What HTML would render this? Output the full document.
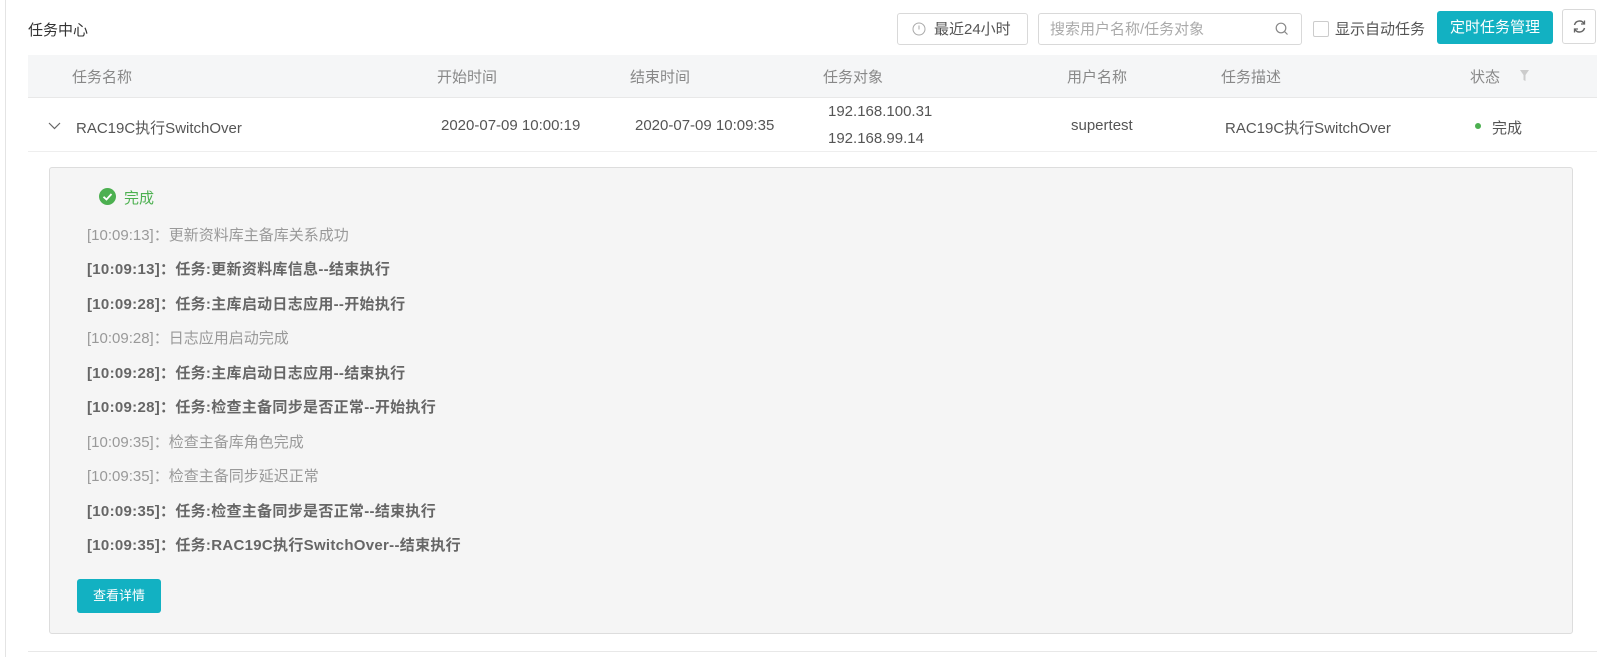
<!DOCTYPE html>
<html><head><meta charset="utf-8"><style>
*{margin:0;padding:0;box-sizing:border-box}
body{width:1605px;height:657px;background:#fff;font-family:"Liberation Sans","Noto Sans CJK SC",sans-serif;font-size:15px;color:#555;position:relative;overflow:hidden}
.a{position:absolute;white-space:nowrap}
.lb{border-left:1px solid #e4e4e4;position:absolute;left:5px;top:0;bottom:0}
.hd{position:absolute;left:28px;top:55px;width:1569px;height:43px;background:#f5f6f7;border-bottom:1px solid #e8e8e8}
.hd span{position:absolute;top:11px;color:#888}
.row span{position:absolute;color:#555}
.box{position:absolute;left:49px;top:167px;width:1524px;height:467px;background:#f5f5f5;border:1px solid #ddd;border-radius:3px}
.l{position:absolute;left:37px;color:#999;font-size:15px;white-space:nowrap}
.l.b{font-weight:bold;color:#666;letter-spacing:0.3px}
</style></head><body>
<div class="lb"></div>
<div class="a" style="left:28px;top:19px;color:#333">任务中心</div>
<div class="a" style="left:897px;top:13px;width:131px;height:32px;border:1px solid #d9d9d9;border-radius:3px"></div>
<svg class="a" style="left:912px;top:22px" width="14" height="14"><circle cx="7" cy="7" r="6" fill="none" stroke="#aaa"/><path d="M7 3.5V7.5" stroke="#aaa"/></svg>
<div class="a" style="left:934px;top:18px;color:#555">最近24小时</div>
<div class="a" style="left:1038px;top:13px;width:264px;height:32px;border:1px solid #d9d9d9;border-radius:3px"></div>
<div class="a" style="left:1050px;top:18px;color:#aaa">搜索用户名称/任务对象</div>
<svg class="a" style="left:1275px;top:22px" width="14" height="14"><circle cx="6" cy="6" r="4.8" fill="none" stroke="#888" stroke-width="1.2"/><path d="M9.5 9.5L12.5 12.5" stroke="#888" stroke-width="1.2"/></svg>
<div class="a" style="left:1313px;top:21px;width:16px;height:16px;border:1px solid #ccc;border-radius:2px"></div>
<div class="a" style="left:1335px;top:18px;color:#555">显示自动任务</div>
<div class="a" style="left:1437px;top:11px;width:116px;height:33px;background:#12b1c2;border-radius:3px;color:#fff;text-align:center;line-height:33px">定时任务管理</div>
<div class="a" style="left:1562px;top:9px;width:34px;height:35px;border:1px solid #d9d9d9;border-radius:3px"></div>
<svg class="a" style="left:1572px;top:19px" width="15" height="15"><path d="M2.5 6A5.2 5.2 0 0 1 12 4.5M12.5 9A5.2 5.2 0 0 1 3 10.5" fill="none" stroke="#666" stroke-width="1.5"/><path d="M12.5 1.5V5H9" fill="none" stroke="#666" stroke-width="1.3"/><path d="M2.5 13.5V10H6" fill="none" stroke="#666" stroke-width="1.3"/></svg>
<div class="hd">
<span style="left:44px">任务名称</span><span style="left:409px">开始时间</span><span style="left:602px">结束时间</span><span style="left:795px">任务对象</span><span style="left:1039px">用户名称</span><span style="left:1193px">任务描述</span><span style="left:1442px">状态</span>
<svg style="position:absolute;left:1492px;top:15px" width="10" height="12"><path d="M0 0H9L5.5 5V11L3.5 10V5Z" fill="#ccc"/></svg>
</div>
<div class="row">
<svg class="a" style="left:48px;top:122px" width="13" height="8"><path d="M1 1L6.5 6.5L12 1" fill="none" stroke="#666" stroke-width="1.2"/></svg>
<span style="left:76px;top:117px">RAC19C执行SwitchOver</span>
<span style="left:441px;top:117px">2020-07-09 10:00:19</span>
<span style="left:635px;top:117px">2020-07-09 10:09:35</span>
<span style="left:828px;top:103px">192.168.100.31</span>
<span style="left:828px;top:130px">192.168.99.14</span>
<span style="left:1071px;top:117px">supertest</span>
<span style="left:1225px;top:117px">RAC19C执行SwitchOver</span>
<span style="left:1475px;top:123px;width:6px;height:6px;border-radius:50%;background:#4cb050"></span>
<span style="left:1492px;top:117px">完成</span>
</div>
<div class="a" style="left:28px;top:151px;width:1569px;border-top:1px solid #eee"></div>
<div class="box">
<svg style="position:absolute;left:49px;top:20px" width="17" height="17"><circle cx="8.5" cy="8.5" r="8.5" fill="#4cb050"/><path d="M4.5 8.8L7.5 11.5L12.5 6" fill="none" stroke="#fff" stroke-width="1.8"/></svg>
<div class="l" style="left:74px;top:19px;color:#4cb050">完成</div>
<div class="l" style="top:56px">[10:09:13]：更新资料库主备库关系成功</div>
<div class="l b" style="top:90px">[10:09:13]：任务:更新资料库信息--结束执行</div>
<div class="l b" style="top:125px">[10:09:28]：任务:主库启动日志应用--开始执行</div>
<div class="l" style="top:159px">[10:09:28]：日志应用启动完成</div>
<div class="l b" style="top:194px">[10:09:28]：任务:主库启动日志应用--结束执行</div>
<div class="l b" style="top:228px">[10:09:28]：任务:检查主备同步是否正常--开始执行</div>
<div class="l" style="top:263px">[10:09:35]：检查主备库角色完成</div>
<div class="l" style="top:297px">[10:09:35]：检查主备同步延迟正常</div>
<div class="l b" style="top:332px">[10:09:35]：任务:检查主备同步是否正常--结束执行</div>
<div class="l b" style="top:366px">[10:09:35]：任务:RAC19C执行SwitchOver--结束执行</div>
<div style="position:absolute;left:27px;top:411px;width:84px;height:34px;background:#12b1c2;border-radius:3px;color:#fff;font-size:13px;text-align:center;line-height:34px">查看详情</div>
</div>
<div class="a" style="left:28px;top:651px;width:1569px;border-top:1px solid #e8e8e8"></div>
</body></html>
